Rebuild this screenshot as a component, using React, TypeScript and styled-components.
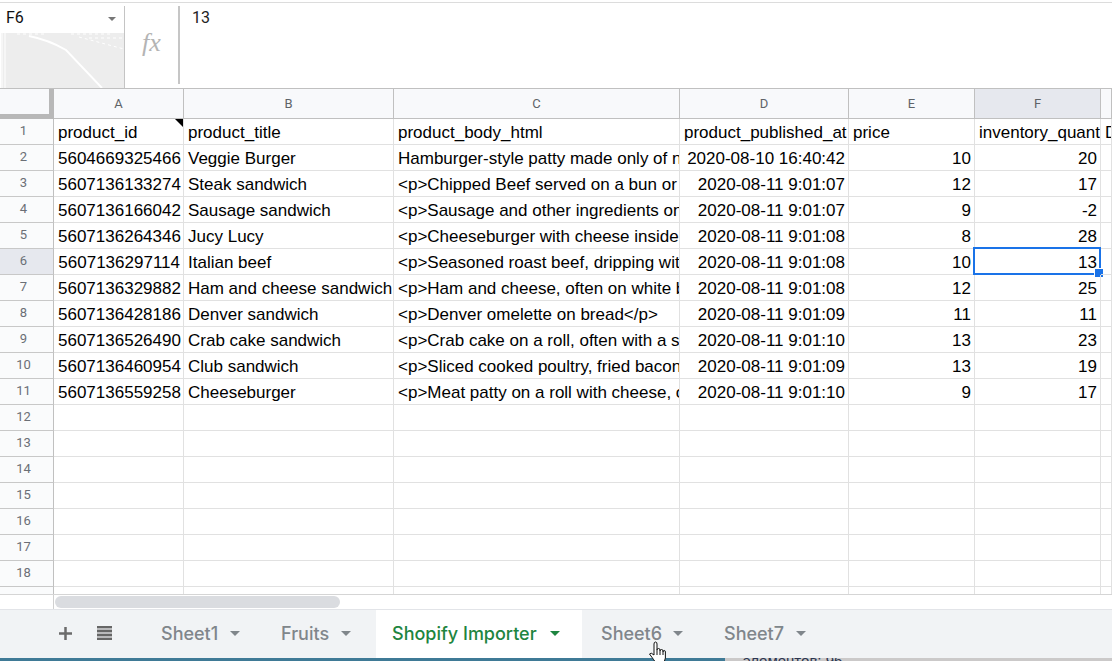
import React from "react";
import styled, { createGlobalStyle, css } from "styled-components";

const Global = createGlobalStyle`
  *, *::before, *::after { box-sizing: border-box; }
  body { margin: 0; background: #fff; font-family: "Liberation Sans", Arial, sans-serif; }
  button, input, textarea { font: inherit; border: 0; margin: 0; padding: 0; background: none; }
`;

const Page = styled.main`
  display: flex;
  flex-direction: column;
  height: 100vh;
  min-height: 400px;
  overflow: hidden;
`;

const FormulaBar = styled.section`
  flex: none;
  display: flex;
  height: 86px;
  margin-top: 2px;
  border-top: 1px solid #dcdcdc;
`;

const NameBox = styled.div`
  display: flex;
  flex-direction: column;
  width: 125px;
  margin-top: 3px;
  border-right: 1px solid #c4c4c4;
`;

const NameRow = styled.div`
  display: flex;
  align-items: center;
  height: 27px;
  padding: 0 8px 3px 6px;
`;

const NameInput = styled.input`
  flex: 1;
  min-width: 0;
  font-family: Roboto, sans-serif;
  font-size: 16px;
  line-height: 20px;
  color: #111;
  outline: none;
`;

const NameArrow = styled.button`
  display: flex;
  padding-top: 2px;
`;

const NameShade = styled.div`
  flex: 1;
  margin-left: 1px;
  background: #ededed;
  svg { display: block; width: 100%; height: 100%; }
`;

const FxLabel = styled.label`
  display: flex;
  align-items: center;
  justify-content: center;
  width: 55px;
  margin: 3px 0 4px;
  padding-bottom: 5px;
  border-right: 2px solid #c6c6c6;
  font: italic 26px "Liberation Serif", serif;
  color: #b4b4b4;
`;

const FormulaInput = styled.textarea`
  flex: 1;
  padding: 5px 12px;
  font-family: Roboto, sans-serif;
  font-size: 16px;
  line-height: 20px;
  color: #222;
  resize: none;
  outline: none;
`;

const GridArea = styled.section`
  flex: 1;
  min-height: 0;
  overflow: hidden;
  border-top: 1px solid #c0c0c0;
  border-bottom: 1px solid #d5d5d5;
`;

const Grid = styled.table`
  width: 100%;
  height: 100%;
  table-layout: fixed;
  border-collapse: separate;
  border-spacing: 0;
`;

const Col = styled.col<{ $w?: number }>`
  ${(p) => p.$w && css`width: ${p.$w}px;`}
`;

const Row = styled.tr<{ $fill?: boolean }>`
  ${(p) =>
    p.$fill
      ? css`
          && > * { border-bottom: 0; }
        `
      : css`
          height: 26px;
        `}
`;

const HeadRow = styled.tr`
  height: 30px;
`;

const ColHead = styled.th<{ $active?: boolean }>`
  padding: 0;
  border-right: 1px solid #c0c0c0;
  border-bottom: 1px solid #c0c0c0;
  background: ${(p) => (p.$active ? "#e6e8ee" : "#f8f9fb")};
  font: 400 13px Roboto, sans-serif;
  color: #5f6368;
`;

const Corner = styled.td`
  padding: 0;
  border-right: 5px solid #b8b8b8;
  border-bottom: 5px solid #b8b8b8;
  background: #f8f9fb;
`;

const RowHead = styled.th<{ $active?: boolean }>`
  padding: 0 6px 2px 0;
  border-right: 1px solid #c0c0c0;
  border-bottom: 1px solid #c8c8c8;
  background: ${(p) => (p.$active ? "#e6e8ee" : "#fafbfc")};
  font: 400 13px/20px Roboto, sans-serif;
  color: #6b6f76;
`;

const Cell = styled.td<{ $right?: boolean; $selected?: boolean }>`
  position: relative;
  padding: 2px 3px 0 4px;
  border-right: 1px solid #e1e1e1;
  border-bottom: 1px solid #e1e1e1;
  font-size: 17px;
  line-height: 20px;
  color: #000;
  white-space: nowrap;
  overflow: ${(p) => (p.$selected ? "visible" : "hidden")};
  text-align: ${(p) => (p.$right ? "right" : "left")};
`;

const Selection = styled.span`
  position: absolute;
  inset: -2px -1px -1px -2px;
  border: 2px solid #1a73e8;
  &::after {
    content: "";
    position: absolute;
    right: -4px;
    bottom: -4px;
    width: 9px;
    height: 9px;
    border: solid #fff;
    border-width: 1px 0 0 1px;
    background: #1a73e8;
  }
`;

const NoteMark = styled.span`
  position: absolute;
  top: 0;
  right: 0;
  border-top: 8px solid #000;
  border-left: 8px solid transparent;
`;

const ScrollTrack = styled.div`
  flex: none;
  display: flex;
  height: 14px;
  padding-top: 1px;
  &::before {
    content: "";
    width: 54px;
    margin-top: -1px;
    border-right: 1px solid #d0d0d0;
  }
`;

const ScrollThumb = styled.div`
  width: 285px;
  height: 12px;
  margin-left: 1px;
  border-radius: 6px;
  background: #dadce0;
`;

const TabBar = styled.nav`
  flex: none;
  display: flex;
  height: 49px;
  padding-left: 56px;
  border-top: 1px solid #e2e4e8;
  background: #f1f3f5;
`;

const Tools = styled.div`
  display: flex;
  width: 89px;
`;

const ToolButton = styled.button`
  display: flex;
  align-items: center;
  justify-content: center;
  width: 39px;
  height: 46px;
  padding-right: 20px;
`;

const SheetTab = styled.button<{ $active?: boolean; $width: number }>`
  display: flex;
  align-items: center;
  justify-content: space-between;
  width: ${(p) => p.$width}px;
  margin-right: 3px;
  padding: 0 22px 2px 16px;
  font: 500 18px Inter, sans-serif;
  color: ${(p) => (p.$active ? "#1e8540" : "#80868b")};
  background: ${(p) => (p.$active ? "#fff" : "transparent")};
`;

const StatusStrip = styled.footer`
  flex: none;
  display: flex;
  height: 3px;
  overflow: hidden;
  background: #cbc9c9;
`;

const StripAccent = styled.div`
  width: 725px;
  background: #3f7a96;
`;

const StripText = styled.span`
  flex: 1;
  padding-left: 18px;
  font-size: 15px;
  line-height: 6px;
  color: #2b3550;
`;

const Pointer = styled.svg`
  position: absolute;
  left: 648px;
  top: 641px;
`;

const Triangle = () => (
  <svg width="10" height="5" viewBox="0 0 10 5" aria-hidden="true">
    <path d="M0 0h10L5 5z" fill="currentColor" />
  </svg>
);

const columns = [
  { name: "A", width: 130 },
  { name: "B", width: 210 },
  { name: "C", width: 286 },
  { name: "D", width: 169 },
  { name: "E", width: 126 },
  { name: "F", width: 126 },
  { name: "", width: undefined },
];

const rows: string[][] = [
  ["product_id", "product_title", "product_body_html", "product_published_at", "price", "inventory_quanti", "D"],
  ["5604669325466", "Veggie Burger", "Hamburger-style patty made only of no", "2020-08-10 16:40:42", "10", "20"],
  ["5607136133274", "Steak sandwich", "<p>Chipped Beef served on a bun or r", "2020-08-11 9:01:07", "12", "17"],
  ["5607136166042", "Sausage sandwich", "<p>Sausage and other ingredients on", "2020-08-11 9:01:07", "9", "-2"],
  ["5607136264346", "Jucy Lucy", "<p>Cheeseburger with cheese inside t", "2020-08-11 9:01:08", "8", "28"],
  ["5607136297114", "Italian beef", "<p>Seasoned roast beef, dripping with", "2020-08-11 9:01:08", "10", "13"],
  ["5607136329882", "Ham and cheese sandwich", "<p>Ham and cheese, often on white b", "2020-08-11 9:01:08", "12", "25"],
  ["5607136428186", "Denver sandwich", "<p>Denver omelette on bread</p>", "2020-08-11 9:01:09", "11", "11"],
  ["5607136526490", "Crab cake sandwich", "<p>Crab cake on a roll, often with a sa", "2020-08-11 9:01:10", "13", "23"],
  ["5607136460954", "Club sandwich", "<p>Sliced cooked poultry, fried bacon,", "2020-08-11 9:01:09", "13", "19"],
  ["5607136559258", "Cheeseburger", "<p>Meat patty on a roll with cheese, o", "2020-08-11 9:01:10", "9", "17"],
];

const ROW_COUNT = 18;
const numeric = (col: number) => col === 0 || (col >= 3 && col <= 5);

const tabs = [
  { name: "Sheet1", width: 117 },
  { name: "Fruits", width: 108 },
  { name: "Shopify Importer", width: 206, active: true },
  { name: "Sheet6", width: 120 },
  { name: "Sheet7", width: 120 },
];

export default function App() {
  return (
    <Page>
      <Global />
      <FormulaBar>
        <NameBox>
          <NameRow>
            <NameInput aria-label="Name box" defaultValue="F6" />
            <NameArrow aria-label="Named ranges">
              <svg width="8" height="4" viewBox="0 0 8 4" aria-hidden="true">
                <path d="M0 0h8L4 4z" fill="#777" />
              </svg>
            </NameArrow>
          </NameRow>
          <NameShade>
            <svg viewBox="0 0 123 55" preserveAspectRatio="none" fill="none" stroke="#fff" aria-hidden="true">
              <path d="M1 0v55M4 0v55" />
              <path d="M28 3q20 4 37 14l36 38" strokeWidth="2" />
              <path d="M78 4l45 12M16 1h30M70 1h40M88 5h34" strokeDasharray="3 3" />
            </svg>
          </NameShade>
        </NameBox>
        <FxLabel htmlFor="formula">fx</FxLabel>
        <FormulaInput id="formula" defaultValue="13" />
      </FormulaBar>

      <GridArea>
        <Grid>
          <colgroup>
            <Col $w={54} />
            {columns.map((c, i) => (
              <Col key={i} $w={c.width} />
            ))}
          </colgroup>
          <thead>
            <HeadRow>
              <Corner />
              {columns.map((c, i) => (
                <ColHead key={i} scope="col" $active={c.name === "F"}>
                  {c.name}
                </ColHead>
              ))}
            </HeadRow>
          </thead>
          <tbody>
            {Array.from({ length: ROW_COUNT }, (_, r) => (
              <Row key={r}>
                <RowHead scope="row" $active={r === 5}>
                  {r + 1}
                </RowHead>
                {columns.map((_c, c) => {
                  const selected = r === 5 && c === 5;
                  return (
                    <Cell key={c} $right={r > 0 && numeric(c)} $selected={selected}>
                      {rows[r]?.[c]}
                      {r === 0 && c === 0 && <NoteMark />}
                      {selected && <Selection />}
                    </Cell>
                  );
                })}
              </Row>
            ))}
            <Row $fill>
              <RowHead />
              {columns.map((_c, c) => (
                <Cell key={c} />
              ))}
            </Row>
          </tbody>
        </Grid>
      </GridArea>

      <ScrollTrack>
        <ScrollThumb />
      </ScrollTrack>

      <TabBar aria-label="Sheets">
        <Tools>
          <ToolButton aria-label="Add sheet">
            <svg width="13" height="13" viewBox="0 0 13 13" aria-hidden="true">
              <path d="M6.5 0v13M0 6.500h13" stroke="#6b6b6b" strokeWidth="2.500" />
            </svg>
          </ToolButton>
          <ToolButton aria-label="All sheets">
            <svg width="15" height="14" viewBox="0 0 15 14" aria-hidden="true">
              <path d="M0 0h15v14H0z" fill="#b9b9bb" />
              <path d="M0 1h15M0 5h15M0 9h15M0 13h15" stroke="#666" strokeWidth="2" />
            </svg>
          </ToolButton>
        </Tools>
        {tabs.map((t) => (
          <SheetTab key={t.name} $active={t.active} $width={t.width}>
            {t.name}
            <Triangle />
          </SheetTab>
        ))}
      </TabBar>

      <StatusStrip>
        <StripAccent />
        <StripText>элементов: 96</StripText>
      </StatusStrip>

      <Pointer width="18" height="22" viewBox="0 0 18 22" aria-hidden="true">
        <path
          d="M6 14V3q0-2 1.500-2T9 3v6q0-1.500 1.500-1.500T12 9v1q0-1.500 1.500-1.500T15 10v1q0-1.500 1.200-1.500T17.400 11v6q0 4-4 5H8q-2-3-6.500-9 1.500-2 4.500 1z"
          fill="#fff"
          stroke="#111"
        />
        <path d="M9 9v5M12 10v4M15 11v3" stroke="#111" />
      </Pointer>
    </Page>
  );
}
